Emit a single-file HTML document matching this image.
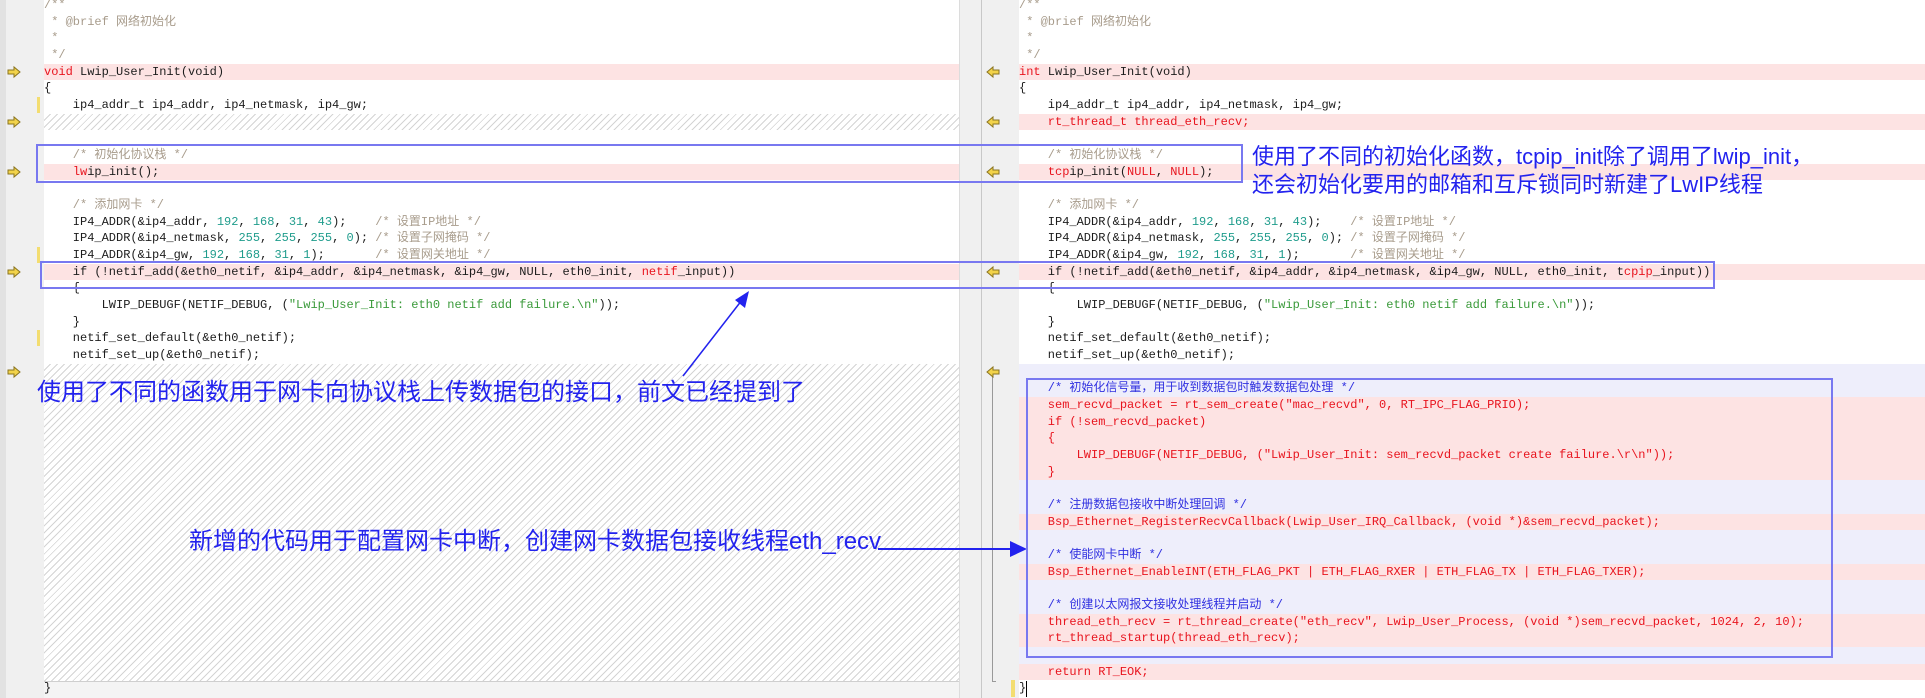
<!DOCTYPE html>
<html><head><meta charset="utf-8">
<style>
*{margin:0;padding:0;box-sizing:border-box}
body{width:1925px;height:698px;overflow:hidden;background:#fff;position:relative;font-family:"Liberation Mono","Noto Sans CJK SC",monospace;font-size:12px;color:#1c1c1c}
.a{position:absolute}
.row{position:absolute;height:16.67px;line-height:16.67px;white-space:pre}
.pk{background:#fde3e3}
.lv{background:#eeeefb}
.hat{background:repeating-linear-gradient(135deg,#fff 0 4px,#d4d4d4 4px 5px)}
.r{color:#e8141e}
.c{color:#a89c8c}
.n{color:#1f9c8c}
.s{color:#3a9a3a}
.b{color:#3030e0}
.ann{position:absolute;color:#2222ee;font-family:"Liberation Sans","Noto Sans CJK SC",sans-serif;white-space:nowrap}
.box{position:absolute;border:2px solid #7878f0}
</style></head><body>
<!-- gutters -->
<div class="a" style="left:0;top:0;width:44px;height:698px;background:#f0f0f0;border-left:6px solid #e2e2e2"></div>
<div class="a" style="left:959px;top:0;width:60px;height:698px;background:#f0f0f0"></div>
<div class="a" style="left:981px;top:0;width:1px;height:698px;background:#c8c8c8"></div>
<div class="a" style="left:959px;top:0;width:1px;height:698px;background:#dcdcdc"></div>

<!-- left pane backgrounds -->
<div class="row pk" style="left:44px;top:63.7px;width:915px"></div>
<div class="row hat" style="left:44px;top:113.7px;width:915px"></div>
<div class="row pk" style="left:44px;top:163.7px;width:915px"></div>
<div class="row pk" style="left:44px;top:263.7px;width:915px"></div>
<div class="a hat" style="left:44px;top:363.7px;width:915px;height:317px"></div>
<div class="a" style="left:44px;top:681px;width:915px;height:17px;background:#f4f4f4;border-top:1px solid #cfcfcf"></div>

<!-- right pane backgrounds -->
<div class="row pk" style="left:1019px;top:63.7px;width:906px"></div>
<div class="row pk" style="left:1019px;top:113.7px;width:906px"></div>
<div class="row pk" style="left:1019px;top:163.7px;width:906px"></div>
<div class="row pk" style="left:1019px;top:263.7px;width:906px"></div>
<div class="a lv" style="left:1019px;top:363.7px;width:906px;height:300px"></div>
<div class="a pk" style="left:1019px;top:397px;width:906px;height:83.4px"></div>
<div class="row pk" style="left:1019px;top:513.7px;width:906px"></div>
<div class="row pk" style="left:1019px;top:563.7px;width:906px"></div>
<div class="a pk" style="left:1019px;top:613.7px;width:906px;height:33.4px"></div>
<div class="row pk" style="left:1019px;top:663.7px;width:906px"></div>

<!-- yellow markers -->
<div class="a" style="left:37px;top:97px;width:3px;height:16px;background:#f3dd70"></div>
<div class="a" style="left:37px;top:247px;width:3px;height:16px;background:#f3dd70"></div>
<div class="a" style="left:37px;top:330px;width:3px;height:16px;background:#f3dd70"></div>
<div class="a" style="left:1011px;top:680px;width:4px;height:17px;background:#f3dd70"></div>
<div class="a" style="left:992px;top:370px;width:1px;height:312px;background:#999"></div>
<div class="a" style="left:992px;top:681px;width:4px;height:1px;background:#999"></div>

<!-- arrows -->
<svg class="a" style="left:0;top:0" width="1925" height="698">
<defs>
<path id="ar" d="M0,3 H6 V0 L12,5 L6,10 V7 H0 Z" fill="#f2d34a" stroke="#8a7420" stroke-width="1"/>
<path id="al" d="M12,3 H6 V0 L0,5 L6,10 V7 H12 Z" fill="#f2d34a" stroke="#8a7420" stroke-width="1"/>
</defs>
<use href="#ar" x="8" y="67"/><use href="#ar" x="8" y="117"/><use href="#ar" x="8" y="167"/><use href="#ar" x="8" y="267"/><use href="#ar" x="8" y="367"/>
<use href="#al" x="987" y="67"/><use href="#al" x="987" y="117"/><use href="#al" x="987" y="167"/><use href="#al" x="987" y="267"/><use href="#al" x="987" y="367"/>
<line x1="683" y1="376" x2="742" y2="300" stroke="#2222ee" stroke-width="1.5"/>
<path d="M749,291 L745,308 L735,300 Z" fill="#2222ee"/>
<line x1="878" y1="549" x2="1012" y2="549" stroke="#2222ee" stroke-width="2"/>
<path d="M1027,549 L1010,541 L1010,557 Z" fill="#2222ee"/>
</svg>

<!-- left code -->
<div class="a" style="left:44px;top:-3px">
<div class="row c" style="top:0">/**</div>
<div class="row c" style="top:16.67px"> * @brief 网络初始化</div>
<div class="row c" style="top:33.33px"> *</div>
<div class="row c" style="top:50px"> */</div>
<div class="row" style="top:66.67px"><span class="r">void</span> Lwip_User_Init(void)</div>
<div class="row" style="top:83.33px">{</div>
<div class="row" style="top:100px">    ip4_addr_t ip4_addr, ip4_netmask, ip4_gw;</div>
<div class="row" style="top:150px"><span class="c">    /* 初始化协议栈 */</span></div>
<div class="row" style="top:166.67px">    <span class="r">lw</span>ip_init();</div>
<div class="row c" style="top:200px">    /* 添加网卡 */</div>
<div class="row" style="top:216.67px">    IP4_ADDR(&amp;ip4_addr, <span class="n">192</span>, <span class="n">168</span>, <span class="n">31</span>, <span class="n">43</span>);    <span class="c">/* 设置IP地址 */</span></div>
<div class="row" style="top:233.33px">    IP4_ADDR(&amp;ip4_netmask, <span class="n">255</span>, <span class="n">255</span>, <span class="n">255</span>, <span class="n">0</span>); <span class="c">/* 设置子网掩码 */</span></div>
<div class="row" style="top:250px">    IP4_ADDR(&amp;ip4_gw, <span class="n">192</span>, <span class="n">168</span>, <span class="n">31</span>, <span class="n">1</span>);       <span class="c">/* 设置网关地址 */</span></div>
<div class="row" style="top:266.67px">    if (!netif_add(&amp;eth0_netif, &amp;ip4_addr, &amp;ip4_netmask, &amp;ip4_gw, NULL, eth0_init, <span class="r">netif</span>_input))</div>
<div class="row" style="top:283.33px">    {</div>
<div class="row" style="top:300px">        LWIP_DEBUGF(NETIF_DEBUG, (<span class="s">"Lwip_User_Init: eth0 netif add failure.\n"</span>));</div>
<div class="row" style="top:316.67px">    }</div>
<div class="row" style="top:333.33px">    netif_set_default(&amp;eth0_netif);</div>
<div class="row" style="top:350px">    netif_set_up(&amp;eth0_netif);</div>
<div class="row" style="top:683.33px">}</div>
</div>

<!-- right code -->
<div class="a" style="left:1019px;top:-3px">
<div class="row c" style="top:0">/**</div>
<div class="row c" style="top:16.67px"> * @brief 网络初始化</div>
<div class="row c" style="top:33.33px"> *</div>
<div class="row c" style="top:50px"> */</div>
<div class="row" style="top:66.67px"><span class="r">int</span> Lwip_User_Init(void)</div>
<div class="row" style="top:83.33px">{</div>
<div class="row" style="top:100px">    ip4_addr_t ip4_addr, ip4_netmask, ip4_gw;</div>
<div class="row r" style="top:116.67px">    rt_thread_t thread_eth_recv;</div>
<div class="row c" style="top:150px">    /* 初始化协议栈 */</div>
<div class="row" style="top:166.67px">    <span class="r">tcp</span>ip_init(<span class="r">NULL</span>, <span class="r">NULL</span>);</div>
<div class="row c" style="top:200px">    /* 添加网卡 */</div>
<div class="row" style="top:216.67px">    IP4_ADDR(&amp;ip4_addr, <span class="n">192</span>, <span class="n">168</span>, <span class="n">31</span>, <span class="n">43</span>);    <span class="c">/* 设置IP地址 */</span></div>
<div class="row" style="top:233.33px">    IP4_ADDR(&amp;ip4_netmask, <span class="n">255</span>, <span class="n">255</span>, <span class="n">255</span>, <span class="n">0</span>); <span class="c">/* 设置子网掩码 */</span></div>
<div class="row" style="top:250px">    IP4_ADDR(&amp;ip4_gw, <span class="n">192</span>, <span class="n">168</span>, <span class="n">31</span>, <span class="n">1</span>);       <span class="c">/* 设置网关地址 */</span></div>
<div class="row" style="top:266.67px">    if (!netif_add(&amp;eth0_netif, &amp;ip4_addr, &amp;ip4_netmask, &amp;ip4_gw, NULL, eth0_init, t<span class="r">cpip</span>_input))</div>
<div class="row" style="top:283.33px">    {</div>
<div class="row" style="top:300px">        LWIP_DEBUGF(NETIF_DEBUG, (<span class="s">"Lwip_User_Init: eth0 netif add failure.\n"</span>));</div>
<div class="row" style="top:316.67px">    }</div>
<div class="row" style="top:333.33px">    netif_set_default(&amp;eth0_netif);</div>
<div class="row" style="top:350px">    netif_set_up(&amp;eth0_netif);</div>
<div class="row b" style="top:383.33px">    /* 初始化信号量，用于收到数据包时触发数据包处理 */</div>
<div class="row r" style="top:400px">    sem_recvd_packet = rt_sem_create("mac_recvd", 0, RT_IPC_FLAG_PRIO);</div>
<div class="row r" style="top:416.67px">    if (!sem_recvd_packet)</div>
<div class="row r" style="top:433.33px">    {</div>
<div class="row r" style="top:450px">        LWIP_DEBUGF(NETIF_DEBUG, ("Lwip_User_Init: sem_recvd_packet create failure.\r\n"));</div>
<div class="row r" style="top:466.67px">    }</div>
<div class="row b" style="top:500px">    /* 注册数据包接收中断处理回调 */</div>
<div class="row r" style="top:516.67px">    Bsp_Ethernet_RegisterRecvCallback(Lwip_User_IRQ_Callback, (void *)&amp;sem_recvd_packet);</div>
<div class="row b" style="top:550px">    /* 使能网卡中断 */</div>
<div class="row r" style="top:566.67px">    Bsp_Ethernet_EnableINT(ETH_FLAG_PKT | ETH_FLAG_RXER | ETH_FLAG_TX | ETH_FLAG_TXER);</div>
<div class="row b" style="top:600px">    /* 创建以太网报文接收处理线程并启动 */</div>
<div class="row r" style="top:616.67px">    thread_eth_recv = rt_thread_create("eth_recv", Lwip_User_Process, (void *)sem_recvd_packet, 1024, 2, 10);</div>
<div class="row r" style="top:633.33px">    rt_thread_startup(thread_eth_recv);</div>
<div class="row r" style="top:666.67px">    return RT_EOK;</div>
<div class="row" style="top:683.33px">}</div>
</div>
<div class="a" style="left:1026px;top:681px;width:1px;height:16px;background:#000"></div>

<!-- annotation boxes -->
<div class="box" style="left:36px;top:144px;width:1207px;height:39px"></div>
<div class="box" style="left:40px;top:261px;width:1675px;height:28px"></div>
<div class="box" style="left:1026px;top:378px;width:807px;height:280px"></div>

<div class="ann" style="left:1252px;top:143px;font-size:22px;line-height:28px">使用了不同的初始化函数，tcpip_init除了调用了lwip_init，<br>还会初始化要用的邮箱和互斥锁同时新建了LwIP线程</div>
<div class="ann" style="left:37px;top:379px;font-size:24px;line-height:28px">使用了不同的函数用于网卡向协议栈上传数据包的接口，前文已经提到了</div>
<div class="ann" style="left:189px;top:528px;font-size:24px;line-height:28px">新增的代码用于配置网卡中断，创建网卡数据包接收线程eth_recv</div>
</body></html>
